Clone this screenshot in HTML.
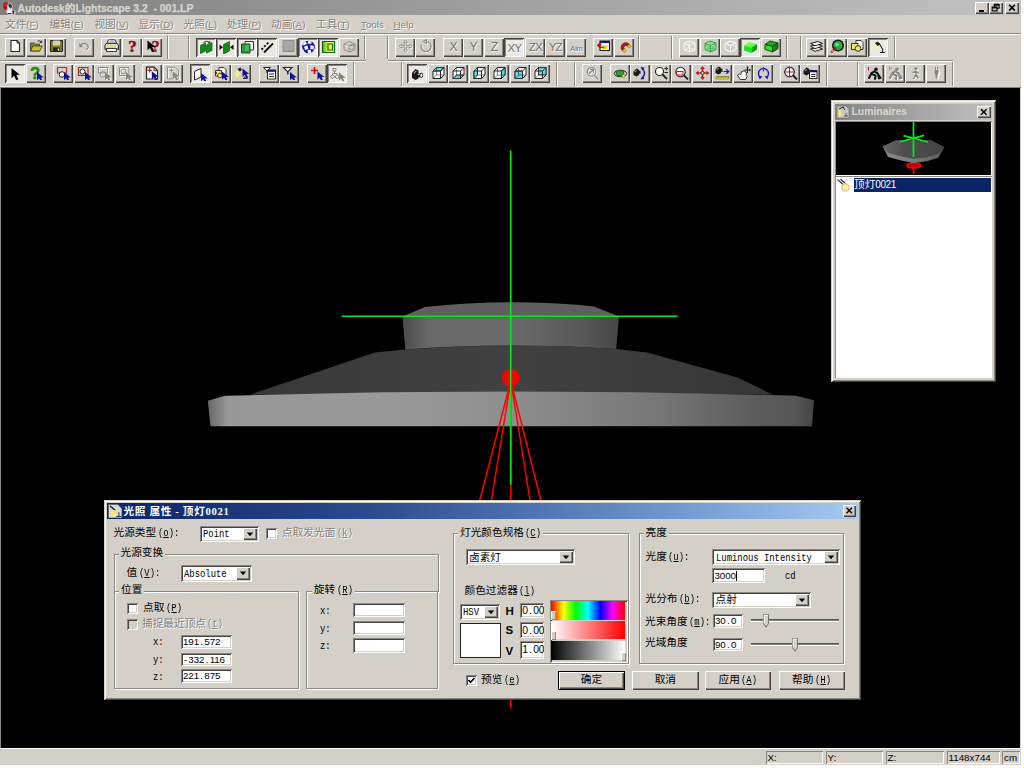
<!DOCTYPE html><html><head><meta charset="utf-8"><title>Lightscape</title><style>
html,body{margin:0;padding:0;background:#fff;}
body{width:1024px;height:768px;position:relative;overflow:hidden;font-family:"Liberation Sans","Noto Sans CJK SC",sans-serif;font-size:10.67px;color:#000;}
div,span,svg,u,b,i{position:absolute;box-sizing:border-box;}
u,b.t,span.t{position:static;}
#app{left:0;top:0;width:1021px;height:765px;background:#d4d0c8;overflow:hidden;}
.b{background:#d4d0c8;box-shadow:inset 1px 1px 0 #fff,inset -1px -1px 0 #45433f,inset -2px -2px 0 #8a8782;}
.p{background:#ebe9e5;box-shadow:inset 1px 1px 0 #45433f,inset -1px -1px 0 #fff,inset 2px 2px 0 #8a8782;}
.vs{width:2px;border-left:1px solid #8a8782;border-right:1px solid #fff;}
.hs{height:2px;border-top:1px solid #8a8782;border-bottom:1px solid #fff;}
.m{top:17px;height:15px;line-height:15px;white-space:nowrap;color:#85827d;text-shadow:1px 1px 0 #fff;font-size:10.67px;}
.m span.t{font-size:9.8px;}
.cj{font-family:"Liberation Mono","Noto Sans CJK SC",monospace;font-size:10.67px;white-space:nowrap;line-height:13px;height:13px;}
.mo{font-family:"Liberation Mono",monospace;font-size:10.67px;white-space:nowrap;line-height:13px;height:13px;transform:translateY(.8px) scaleX(.8333);transform-origin:0 50%;}
.cj span.t{display:inline-block;font-family:"Liberation Mono",monospace;font-size:10.67px;transform:scaleX(.8333);transform-origin:0 50%;white-space:pre;}
.nu{font-family:"Liberation Sans",sans-serif;font-size:9.8px;letter-spacing:-.12px;white-space:nowrap;line-height:13px;height:13px;}
.nu i{position:static;display:inline-block;width:5.33px;text-align:center;font-style:normal;letter-spacing:0;}
.gr{color:#85827d;text-shadow:1px 1px 0 #fff;}
.grp{border:1px solid #8a8782;box-shadow:1px 1px 0 #fff,inset 1px 1px 0 #fff;}
.gl{background:#d4d0c8;padding:0 2px;}
.sk{background:#fff;box-shadow:inset 1px 1px 0 #8a8782,inset -1px -1px 0 #fff,inset 2px 2px 0 #45433f,inset -2px -2px 0 #d4d0c8;}
.cb{width:11px;height:11px;}
.dd{background:#d4d0c8;box-shadow:inset 1px 1px 0 #fff,inset -1px -1px 0 #45433f,inset -2px -2px 0 #8a8782;}
.pb{background:#d4d0c8;box-shadow:inset 1px 1px 0 #fff,inset -1px -1px 0 #45433f,inset -2px -2px 0 #8a8782;text-align:center;}
</style></head><body><div id="app">
<div style="left:0;top:0;width:1021px;height:15.4px;background:linear-gradient(90deg,#808080 0%,#c2c2c2 100%);"></div>
<svg style="left:2px;top:1px" width="15" height="14" viewBox="0 0 15 14"><ellipse cx="3.800" cy="4.800" rx="2.700" ry="3.700" fill="#a81414"/><ellipse cx="3.300" cy="4" rx="1.300" ry="2" fill="#d02828"/><path d="M6 1.500l3 .5 2 3.500-1 2 3.500 2.500v3.500l-3 .5-5-.5-1.500-3 1.500-1.500-.5-3z" fill="#dcdcdc"/><path d="M6.500 2l2.500 1 1.500 3-2 1.500-2-2z" fill="#38404c"/><path d="M5 9.500l2.500-1 1.500 2-1 2.500-2.500-.5z" fill="#f8f8f8"/><path d="M10.500 8.500l2 1.500-.5 3-1.500.5z" fill="#2c3a34"/><path d="M5.500 12.500h4" stroke="#3c4844" stroke-width="1"/></svg>
<div id="ttl" style="left:17.5px;top:1px;height:14px;line-height:14px;font-weight:bold;font-size:10.4px;color:#d8d5ce;-webkit-text-stroke:.25px #d8d5ce;white-space:nowrap;">Autodesk<span class="t" style="font-size:10.67px">的</span>Lightscape 3.2&nbsp; - 001.LP</div>
<div class="b" style="left:975px;top:2px;width:13.5px;height:11.5px"></div><div style="left:978.5px;top:9.5px;width:5px;height:2px;background:#000"></div>
<div class="b" style="left:989px;top:2px;width:13.5px;height:11.5px"></div><svg style="left:989px;top:2px" width="13.5" height="11.5" viewBox="0 0 14 12"><path d="M5.5 2.5h5v4h-5z M5.5 3.3h5" fill="none" stroke="#000" stroke-width="1.2"/><path d="M3.3 5.3h5v4h-5z" fill="#d4d0c8" stroke="#000" stroke-width="1.2"/><path d="M3.3 6h5" stroke="#000" stroke-width="1.4"/></svg>
<div class="b" style="left:1005px;top:2px;width:14px;height:11.5px"></div><svg style="left:1005px;top:2px" width="14" height="11.5" viewBox="0 0 14 12"><path d="M4 3l6 6M10 3l-6 6" stroke="#000" stroke-width="1.5"/></svg>
<div class="m" style="left:5px">文件<span class="t">(<u>F</u>)</span></div>
<div class="m" style="left:49.4px">编辑<span class="t">(<u>E</u>)</span></div>
<div class="m" style="left:94.4px">视图<span class="t">(<u>V</u>)</span></div>
<div class="m" style="left:138.6px">显示<span class="t">(<u>D</u>)</span></div>
<div class="m" style="left:183.6px">光照<span class="t">(<u>L</u>)</span></div>
<div class="m" style="left:226.8px">处理<span class="t">(<u>P</u>)</span></div>
<div class="m" style="left:271px">动画<span class="t">(<u>A</u>)</span></div>
<div class="m" style="left:316px">工具<span class="t">(<u>T</u>)</span></div>
<div class="m" style="left:361px"><span class="t"><u>T</u>ools</span></div>
<div class="m" style="left:393.5px"><span class="t"><u>H</u>elp</span></div>
<div class="hs" style="left:0;top:33px;width:1021px"></div>
<div class="hs" style="left:0;top:59.5px;width:365.5px"></div>
<div class="hs" style="left:387.5px;top:59.5px;width:565px"></div>
<div style="left:0px;top:86px;width:353.5px;height:1px;background:#e6e3dd"></div>
<div style="left:401px;top:86px;width:155.5px;height:1px;background:#e6e3dd"></div>
<div style="left:574.5px;top:86px;width:252.5px;height:1px;background:#e6e3dd"></div>
<div style="left:857.5px;top:86px;width:95px;height:1px;background:#e6e3dd"></div>
<div class="vs" style="left:167px;top:36px;height:23px"></div>
<div class="vs" style="left:188px;top:36px;height:23px"></div>
<div class="vs" style="left:364px;top:36px;height:23px"></div>
<div class="vs" style="left:387px;top:36px;height:23px"></div>
<div class="vs" style="left:637.5px;top:36px;height:23px"></div>
<div class="vs" style="left:670.5px;top:36px;height:23px"></div>
<div class="vs" style="left:785.5px;top:36px;height:23px"></div>
<div class="vs" style="left:799.5px;top:36px;height:23px"></div>
<div class="vs" style="left:893.5px;top:36px;height:23px"></div>
<div class="vs" style="left:352.5px;top:62px;height:24px"></div>
<div class="vs" style="left:400.5px;top:62px;height:24px"></div>
<div class="vs" style="left:555.5px;top:62px;height:24px"></div>
<div class="vs" style="left:574px;top:62px;height:24px"></div>
<div class="vs" style="left:826px;top:62px;height:24px"></div>
<div class="vs" style="left:857px;top:62px;height:24px"></div>
<div class="vs" style="left:951.5px;top:62px;height:24px"></div>
<div class="b" style="left:5px;top:38px;width:20px;height:19px">
<svg style="left:2.5px;top:1.3px" width="15" height="14" viewBox="0 0 15 14"><path d="M3 1.500h6l2.500 2.500v8.500H3z" fill="#fff" stroke="#222" stroke-width="1.100"/><path d="M9 1.500v2.500h2.500" fill="none" stroke="#222" stroke-width=".9"/></svg>
</div>
<div class="b" style="left:26px;top:38px;width:20px;height:19px">
<svg style="left:2.5px;top:1.3px" width="15" height="14" viewBox="0 0 15 14"><path d="M1.500 4h4l1 1.200h4V12h-9z" fill="#8a8a10" stroke="#333" stroke-width=".8"/><path d="M1.500 12l2.300-5h9.700l-3 5z" fill="#c4c42c" stroke="#333" stroke-width=".8"/><path d="M8.500 2.200q2.500-1.500 4 1M12.700 1.500v2h-2" fill="none" stroke="#222" stroke-width=".9"/></svg>
</div>
<div class="b" style="left:46px;top:38px;width:20px;height:19px">
<svg style="left:2.5px;top:1.3px" width="15" height="14" viewBox="0 0 15 14"><path d="M1.500 1.500h12v11h-12z" fill="#80800c" stroke="#222" stroke-width="1"/><path d="M4 1.500h7v5H4z" fill="#d4d0c8"/><path d="M4 8.500h7v4H4z" fill="#222"/><path d="M8.800 9.500h1.400v2.200H8.800z" fill="#eee"/></svg>
</div>
<div class="b" style="left:74px;top:38px;width:20px;height:19px">
<svg style="left:2.5px;top:1.3px" width="15" height="14" viewBox="0 0 15 14"><path d="M3.500 6.500q3.500-3.500 6.500-1t-1 5.500" fill="none" stroke="#fff" stroke-width="1.300" transform="translate(.8 .8)"/><path d="M3.500 6.500q3.500-3.500 6.500-1t-1 5.500" fill="none" stroke="#8a8782" stroke-width="1.300"/><path d="M2 4l.5 4.500 4-1z" fill="#8a8782"/></svg>
</div>
<div class="b" style="left:101px;top:38px;width:20px;height:19px">
<svg style="left:2.5px;top:1.3px" width="15" height="14" viewBox="0 0 15 14"><path d="M4.500 .800h6.500l1.500 3.500h-9.500z" fill="#fff" stroke="#222" stroke-width=".9"/><path d="M2.500 4.300h10.500l1.500 2v4h-13.500v-4z" fill="#d8d8d8" stroke="#222" stroke-width="1"/><path d="M2.500 9.500h10v3h-10z" fill="#fff" stroke="#222" stroke-width=".9"/><path d="M3.500 8h8" stroke="#e0d820" stroke-width="1.300"/><path d="M5.500 2.300h4.500" stroke="#888" stroke-width=".7"/></svg>
</div>
<div class="b" style="left:122px;top:38px;width:20px;height:19px">
<svg style="left:2.5px;top:1.3px" width="15" height="14" viewBox="0 0 15 14"><text x="7.500" y="13" text-anchor="middle" font-family="Liberation Serif,serif" font-weight="bold" font-size="17" fill="#8c0c14" stroke="#8c0c14" stroke-width=".5">?</text></svg>
</div>
<div class="b" style="left:142px;top:38px;width:20px;height:19px">
<svg style="left:2.5px;top:1.3px" width="15" height="14" viewBox="0 0 15 14"><text x="10.500" y="13" text-anchor="middle" font-family="Liberation Serif,serif" font-weight="bold" font-size="16.500" fill="#9c1018" stroke="#9c1018" stroke-width=".4">?</text><path d="M2.5 1.5l0 9.8l2.52 -2.24l2.1 4.2l2.1 -0.98l-1.96 -4.2l3.36 0z" fill="#000"/></svg>
</div>
<div class="p" style="left:196px;top:38px;width:20px;height:19px">
<svg style="left:3.2px;top:2px" width="15" height="14" viewBox="0 0 15 14"><path d="M1.500 5.500l5-2.500v8l-5 2.500z" fill="#148a14" stroke="#0a5a0a" stroke-width=".7"/><path d="M7.500 5l5.500-2.500v8L7.500 13z" fill="#148a14" stroke="#0a5a0a" stroke-width=".7"/><path d="M4.500 2.500q3-2.500 6 0M10.800 1v1.800H9" fill="none" stroke="#222" stroke-width=".9"/></svg>
</div>
<div class="p" style="left:216px;top:38px;width:20px;height:19px">
<svg style="left:3.2px;top:2px" width="15" height="14" viewBox="0 0 15 14"><path d="M4.500 4.500l6-3v9.500l-6 3z" fill="#148a14" stroke="#0a5a0a" stroke-width=".7"/><path d="M.500 4.500l3.500 2.800-3.500 2.800zM14.500 4.500l-3.500 2.800 3.500 2.800z" fill="#111"/></svg>
</div>
<div class="p" style="left:237px;top:38px;width:20px;height:19px">
<svg style="left:3.2px;top:2px" width="15" height="14" viewBox="0 0 15 14"><path d="M5 1.500h8.500V10H5z" fill="#fff" stroke="#333" stroke-width="1"/><path d="M1.500 4h8.500v9H1.500z" fill="#2c9a3c" stroke="#0a5a0a" stroke-width="1"/><path d="M5 5h4v6H5z" fill="#58b868" opacity=".8"/></svg>
</div>
<div class="p" style="left:257px;top:38px;width:20px;height:19px">
<svg style="left:3.2px;top:2px" width="15" height="14" viewBox="0 0 15 14"><path d="M4 12.500L13 3.500" stroke="#111" stroke-width="1.800"/><path d="M1.500 9.500l7.500-7.500" stroke="#111" stroke-width="2" stroke-dasharray="2 1.800"/></svg>
</div>
<div class="b" style="left:278px;top:38px;width:20px;height:19px">
<svg style="left:2.5px;top:1.3px" width="15" height="14" viewBox="0 0 15 14"><path d="M2 1.500h11v11H2z" fill="#a8a6a2" stroke="#8e8c88" stroke-width="1"/></svg>
</div>
<div class="p" style="left:298px;top:38px;width:20px;height:19px">
<svg style="left:3.2px;top:2px" width="15" height="14" viewBox="0 0 15 14"><defs><clipPath id="sph"><circle cx="7.500" cy="7" r="6.300"/></clipPath></defs><circle cx="7.500" cy="7" r="6.300" fill="#1414b4"/><g clip-path="url(#sph)" fill="#f4f4ff"><path d="M1 2.500l3.500-1.500 1.500 3-3.500 1.500zM7.500 0l3.500 1-1 3-3.500-.5zM3 6.500l3.500-1 .8 3.500-3.300 1zM9.500 5l3.500 1-.5 3.500-3.200-.5zM0 10l2.500-.5 1.500 3.500-3 1zM6.500 10l3-0.500 1 3.500-3.500.5zM12.500 10.500l2.500.5v3h-2z"/></g></svg>
</div>
<div class="p" style="left:318px;top:38px;width:20px;height:19px">
<svg style="left:3.2px;top:2px" width="15" height="14" viewBox="0 0 15 14"><defs><linearGradient id="yg" x1="0" x2="1"><stop offset="0" stop-color="#4cb020"/><stop offset=".5" stop-color="#e8f040"/><stop offset="1" stop-color="#f4f470"/></linearGradient></defs><path d="M1.500 1.500h12v11h-12z" fill="url(#yg)" stroke="#0c6a0c" stroke-width="1.200"/><path d="M7 4h4.500v6H7z" fill="none" stroke="#0c6a0c" stroke-width="1.100"/></svg>
</div>
<div class="b" style="left:339px;top:38px;width:20px;height:19px">
<svg style="left:2.5px;top:1.3px" width="15" height="14" viewBox="0 0 15 14"><g fill="none" stroke="#8a8782" stroke-width=".9"><path d="M2 5l5-2.500 6 2.500v6l-6 2-5-2.500z"/><path d="M2 5l5 2.500 6-2.500M7 7.500v5.500"/><circle cx="9.500" cy="8" r="2.500"/></g><path d="M3 6l5 2.500" stroke="#fff" stroke-width=".7"/></svg>
</div>
<div class="b" style="left:395px;top:38px;width:20px;height:19px">
<svg style="left:2.5px;top:1.3px" width="15" height="14" viewBox="0 0 15 14"><g fill="none" stroke-width="0.9"><g stroke="#fff" transform="translate(.8 .8)"><path d="M7.500 1l-2 2.500h1.300v3H3.500V5.200L1 7.300l2.500 2V8h3.300v3H5.500l2 2.500 2-2.500H8.200V8h3.300v1.300l2.500-2-2.500-2.100v1.300H8.200v-3h1.300z"/></g><g stroke="#8a8782"><path d="M7.500 1l-2 2.500h1.300v3H3.500V5.200L1 7.300l2.500 2V8h3.300v3H5.500l2 2.500 2-2.500H8.200V8h3.300v1.300l2.500-2-2.500-2.100v1.300H8.200v-3h1.300z"/></g></g></svg>
</div>
<div class="b" style="left:415px;top:38px;width:20px;height:19px">
<svg style="left:2.5px;top:1.3px" width="15" height="14" viewBox="0 0 15 14"><g fill="none" stroke-width="1.2"><g stroke="#fff" transform="translate(.8 .8)"><path d="M8 2.500a5 5 0 1 1-4.500 3"/><path d="M8.500.500v4l-3-2z"/></g><g stroke="#8a8782"><path d="M8 2.500a5 5 0 1 1-4.500 3"/><path d="M8.500.500v4l-3-2z"/></g></g></svg>
</div>
<div class="b" style="left:443px;top:38px;width:20px;height:19px">
<svg style="left:2.5px;top:1.3px" width="15" height="14" viewBox="0 0 15 14"><text x="8.300" y="12.900" text-anchor="middle" font-family="Liberation Sans,sans-serif" font-size="12.3" letter-spacing="0" fill="#fff">X</text><text x="7.500" y="12.100" text-anchor="middle" font-family="Liberation Sans,sans-serif" font-size="12.3" letter-spacing="0" fill="#716e6a">X</text></svg>
</div>
<div class="b" style="left:463px;top:38px;width:20px;height:19px">
<svg style="left:2.5px;top:1.3px" width="15" height="14" viewBox="0 0 15 14"><text x="8.300" y="12.900" text-anchor="middle" font-family="Liberation Sans,sans-serif" font-size="12.3" letter-spacing="0" fill="#fff">Y</text><text x="7.500" y="12.100" text-anchor="middle" font-family="Liberation Sans,sans-serif" font-size="12.3" letter-spacing="0" fill="#716e6a">Y</text></svg>
</div>
<div class="b" style="left:484px;top:38px;width:20px;height:19px">
<svg style="left:2.5px;top:1.3px" width="15" height="14" viewBox="0 0 15 14"><text x="8.300" y="12.900" text-anchor="middle" font-family="Liberation Sans,sans-serif" font-size="12.3" letter-spacing="0" fill="#fff">Z</text><text x="7.500" y="12.100" text-anchor="middle" font-family="Liberation Sans,sans-serif" font-size="12.3" letter-spacing="0" fill="#716e6a">Z</text></svg>
</div>
<div class="p" style="left:504px;top:38px;width:20px;height:19px">
<svg style="left:3.2px;top:2px" width="15" height="14" viewBox="0 0 15 14"><text x="8.300" y="12.900" text-anchor="middle" font-family="Liberation Sans,sans-serif" font-size="11.3" letter-spacing="-0.6" fill="#fff">XY</text><text x="7.500" y="12.100" text-anchor="middle" font-family="Liberation Sans,sans-serif" font-size="11.3" letter-spacing="-0.6" fill="#716e6a">XY</text></svg>
</div>
<div class="b" style="left:525px;top:38px;width:20px;height:19px">
<svg style="left:2.5px;top:1.3px" width="15" height="14" viewBox="0 0 15 14"><text x="8.300" y="12.900" text-anchor="middle" font-family="Liberation Sans,sans-serif" font-size="11.3" letter-spacing="-0.6" fill="#fff">ZX</text><text x="7.500" y="12.100" text-anchor="middle" font-family="Liberation Sans,sans-serif" font-size="11.3" letter-spacing="-0.6" fill="#716e6a">ZX</text></svg>
</div>
<div class="b" style="left:545px;top:38px;width:20px;height:19px">
<svg style="left:2.5px;top:1.3px" width="15" height="14" viewBox="0 0 15 14"><text x="8.300" y="12.900" text-anchor="middle" font-family="Liberation Sans,sans-serif" font-size="11.3" letter-spacing="-0.6" fill="#fff">YZ</text><text x="7.500" y="12.100" text-anchor="middle" font-family="Liberation Sans,sans-serif" font-size="11.3" letter-spacing="-0.6" fill="#716e6a">YZ</text></svg>
</div>
<div class="b" style="left:566px;top:38px;width:20px;height:19px">
<svg style="left:2.5px;top:1.3px" width="15" height="14" viewBox="0 0 15 14"><text x="8.300" y="12.900" text-anchor="middle" font-family="Liberation Sans,sans-serif" font-size="7.5" letter-spacing="-0.2" fill="#fff">Aim</text><text x="7.500" y="12.100" text-anchor="middle" font-family="Liberation Sans,sans-serif" font-size="7.5" letter-spacing="-0.2" fill="#716e6a">Aim</text></svg>
</div>
<div class="b" style="left:593px;top:38px;width:20px;height:19px">
<svg style="left:2.5px;top:1.3px" width="15" height="14" viewBox="0 0 15 14"><path d="M4 2h9.500v9.500H4z" fill="#f4f4f4" stroke="#222" stroke-width="1.100"/><path d="M4 2h9.500v2H4z" fill="#10108a"/><path d="M6 6.500h5.500v3.500H6z" fill="#e8d820"/><path d="M1 6l3.500-3 1 2.500-1.500 3.500z" fill="#c01818"/><path d="M1 6l3 2.500 4.500-.5" stroke="#801010" stroke-width="1" fill="none"/></svg>
</div>
<div class="b" style="left:614px;top:38px;width:20px;height:19px">
<svg style="left:2.5px;top:1.3px" width="15" height="14" viewBox="0 0 15 14"><g transform="rotate(-42 7.500 7)"><path d="M2.800 9a4.700 4.700 0 0 1 9.400 0h-2.700a2 2 0 0 0-4 0z" fill="#c01414" stroke="#601010" stroke-width=".7"/><path d="M2.800 9h2.700v2.800H2.800zM9.500 9h2.700v2.800H9.500z" fill="#e8d020" stroke="#806c10" stroke-width=".6"/></g></svg>
</div>
<div class="b" style="left:679px;top:38px;width:20px;height:19px">
<svg style="left:2.5px;top:1.3px" width="15" height="14" viewBox="0 0 15 14"><path d="M2 4.500l5-2.500 6 2v6.500l-5.500 2.500-5.500-2.500z" fill="none" stroke="#fff" stroke-width="0.9"/><path d="M2 4.500l5.500 2 5.500-2.500M7.500 6.500v6.500" fill="none" stroke="#fff" stroke-width="0.9"/><path d="M2 11l5-2 6 1.500M7 2v7" fill="none" stroke="#fff" stroke-width=".7"/></svg>
</div>
<div class="b" style="left:700px;top:38px;width:20px;height:19px">
<svg style="left:2.5px;top:1.3px" width="15" height="14" viewBox="0 0 15 14"><path d="M2 4.500l5-2.500 6 2v6.500l-5.500 2.500-5.500-2.500z" fill="#a8e8b0" opacity=".7"/><path d="M2 4.500l5-2.500 6 2v6.500l-5.500 2.500-5.500-2.500z" fill="none" stroke="#28a038" stroke-width="1"/><path d="M2 4.500l5.500 2 5.500-2.500M7.500 6.500v6.500" fill="none" stroke="#28a038" stroke-width="1"/><path d="M2 11l5-2 6 1.500M7 2v7M2 4.500l5.500 8.500M13 4l-5.500 9M2 11l5.500-4.500L13 10.500" fill="none" stroke="#48b858" stroke-width=".8"/></svg>
</div>
<div class="b" style="left:720px;top:38px;width:20px;height:19px">
<svg style="left:2.5px;top:1.3px" width="15" height="14" viewBox="0 0 15 14"><path d="M2 4.500l5-2.500 6 2v6.500l-5.500 2.500-5.500-2.500z" fill="none" stroke="#fff" stroke-width="1"/><path d="M2 4.500l5.500 2 5.500-2.500M7.500 6.500v6.500" fill="none" stroke="#fff" stroke-width="1"/></svg>
</div>
<div class="p" style="left:740px;top:38px;width:20px;height:19px">
<svg style="left:3.2px;top:2px" width="15" height="14" viewBox="0 0 15 14"><path d="M1 5.500l5-3.500 8 2-5.500 3.500z" fill="#6cff48"/><path d="M1 5.500l7.500 2v5.500l-7.500-2.500z" fill="#20e420"/><path d="M8.500 7.500l5.500-3.500v5.500l-5.500 3.500z" fill="#0ca00c"/></svg>
</div>
<div class="b" style="left:761px;top:38px;width:20px;height:19px">
<svg style="left:2.5px;top:1.3px" width="15" height="14" viewBox="0 0 15 14"><path d="M1 5.500l5-3.500 8 2-5.500 3.500z" fill="#18a818" stroke="#063c06" stroke-width=".9"/><path d="M1 5.500l7.500 2v5.500l-7.500-2.500z" fill="#28e428" stroke="#063c06" stroke-width=".9"/><path d="M8.500 7.500l5.500-3.500v5.500l-5.500 3.500z" fill="#0c8a0c" stroke="#063c06" stroke-width=".9"/></svg>
</div>
<div class="b" style="left:806px;top:38px;width:20px;height:19px">
<svg style="left:2.5px;top:1.3px" width="15" height="14" viewBox="0 0 15 14"><g fill="#fff" stroke="#1a1a1a" stroke-width="1"><path d="M1.500 10l7.500-2 4.500 2-7.500 2.300z"/><path d="M1.500 7.300l7.500-2 4.500 2-7.500 2.300z"/><path d="M1.500 4.500l7.500-2 4.500 2-7.500 2.300z"/></g></svg>
</div>
<div class="b" style="left:827px;top:38px;width:20px;height:19px">
<svg style="left:2.5px;top:1.3px" width="15" height="14" viewBox="0 0 15 14"><circle cx="8" cy="6.500" r="6" fill="#111"/><circle cx="8" cy="6.500" r="4.500" fill="#28b038"/><circle cx="7" cy="5.500" r="1.800" fill="#7cdc84"/><path d="M1 13.500l5-5" stroke="#b01414" stroke-width="2.200"/><path d="M1.500 13l2-2" stroke="#fff" stroke-width="1"/></svg>
</div>
<div class="b" style="left:847px;top:38px;width:20px;height:19px">
<svg style="left:2.5px;top:1.3px" width="15" height="14" viewBox="0 0 15 14"><path d="M6 1.500h5l2 2v7H6z" fill="#fff" stroke="#222" stroke-width=".9"/><path d="M1.500 4.500h6.500v6h-6.500z" fill="#f0e868" stroke="#222" stroke-width=".9"/><circle cx="8" cy="9.500" r="2.800" fill="#f0e868" stroke="#222" stroke-width=".9"/></svg>
</div>
<div class="p" style="left:868px;top:38px;width:20px;height:19px">
<svg style="left:3.2px;top:2px" width="15" height="14" viewBox="0 0 15 14"><path d="M1 7.500l3.500-4 2.500 2-2 5z" fill="#f8f490"/><path d="M4 3l3-1.500 2 3-2.500 1.500z" fill="#222"/><path d="M8 3l4 7M9 12.500h5M11.500 10v2.500" stroke="#222" stroke-width="1.100" fill="none"/></svg>
</div>
<div class="p" style="left:5px;top:64px;width:20px;height:19px">
<svg style="left:3.2px;top:3px" width="15" height="14" viewBox="0 0 15 14"><path d="M3.5 1l0 10.15l2.61 -2.32l2.175 4.35l2.175 -1.015l-2.03 -4.35l3.48 0z" fill="#000"/></svg>
</div>
<div class="b" style="left:26px;top:64px;width:20px;height:19px">
<svg style="left:2.5px;top:2.3px" width="15" height="14" viewBox="0 0 15 14"><text x="6" y="13" text-anchor="middle" font-family="Liberation Sans,sans-serif" font-weight="bold" font-size="16.500" fill="#148a14" stroke="#148a14" stroke-width=".5">?</text><path d="M8 6l0 8.26l2.124 -1.888l1.77 3.54l1.77 -0.826l-1.652 -3.54l2.832 0z" fill="#10109a"/></svg>
</div>
<div class="b" style="left:53px;top:64px;width:20px;height:19px">
<svg style="left:2.5px;top:2.3px" width="15" height="14" viewBox="0 0 15 14"><path d="M1.500 1.500h9v5.500h-9z" fill="none" stroke="#b82020" stroke-width="1.100"/><circle cx="6" cy="8.500" r="2.800" fill="#fff" stroke="#222" stroke-width="1"/><path d="M8 6l0 8.26l2.124 -1.888l1.77 3.54l1.77 -0.826l-1.652 -3.54l2.832 0z" fill="#10109a"/></svg>
</div>
<div class="b" style="left:74px;top:64px;width:20px;height:19px">
<svg style="left:2.5px;top:2.3px" width="15" height="14" viewBox="0 0 15 14"><path d="M1.500 1.500h9.500v8h-9.500z" fill="none" stroke="#b82020" stroke-width="1.100"/><circle cx="5.500" cy="5.500" r="2.500" fill="#fff" stroke="#222" stroke-width="1"/><path d="M8 6l0 8.26l2.124 -1.888l1.77 3.54l1.77 -0.826l-1.652 -3.54l2.832 0z" fill="#10109a"/></svg>
</div>
<div class="b" style="left:94px;top:64px;width:20px;height:19px">
<svg style="left:2.5px;top:2.3px" width="15" height="14" viewBox="0 0 15 14"><g fill="none" stroke-width="1"><g stroke="#fff" transform="translate(.8 .8)"><path d="M1.500 1.500h9v5.500h-9z"/><circle cx="6" cy="8.500" r="2.800"/></g><g stroke="#8a8782"><path d="M1.500 1.500h9v5.500h-9z"/><circle cx="6" cy="8.500" r="2.800"/></g></g><g transform="translate(.8 .8)"><path d="M8 6l0 8.26l2.124 -1.888l1.77 3.54l1.77 -0.826l-1.652 -3.54l2.832 0z" fill="#fff"/></g><path d="M8 6l0 8.26l2.124 -1.888l1.77 3.54l1.77 -0.826l-1.652 -3.54l2.832 0z" fill="#8a8782"/></svg>
</div>
<div class="b" style="left:115px;top:64px;width:20px;height:19px">
<svg style="left:2.5px;top:2.3px" width="15" height="14" viewBox="0 0 15 14"><g fill="none" stroke-width="1"><g stroke="#fff" transform="translate(.8 .8)"><path d="M1.500 1.500h9.500v8h-9.500z"/><circle cx="5.500" cy="5.500" r="2.500"/></g><g stroke="#8a8782"><path d="M1.500 1.500h9.500v8h-9.500z"/><circle cx="5.500" cy="5.500" r="2.500"/></g></g><g transform="translate(.8 .8)"><path d="M8 6l0 8.26l2.124 -1.888l1.77 3.54l1.77 -0.826l-1.652 -3.54l2.832 0z" fill="#fff"/></g><path d="M8 6l0 8.26l2.124 -1.888l1.77 3.54l1.77 -0.826l-1.652 -3.54l2.832 0z" fill="#8a8782"/></svg>
</div>
<div class="b" style="left:142px;top:64px;width:20px;height:19px">
<svg style="left:2.5px;top:2.3px" width="15" height="14" viewBox="0 0 15 14"><path d="M1.500 1.200h7.500l3.500 3.500v8.300H1.500z" fill="#fff" stroke="#222" stroke-width="1.200"/><path d="M9 1.200v3.500h3.500" fill="none" stroke="#222" stroke-width=".9"/><path d="M2.500 4.300h4.500M4.700 2v4.600" stroke="#c01818" stroke-width="1.200"/><path d="M6.8 5.2l0 8.26l2.124 -1.888l1.77 3.54l1.77 -0.826l-1.652 -3.54l2.832 0z" fill="#10109a"/></svg>
</div>
<div class="b" style="left:163px;top:64px;width:20px;height:19px">
<svg style="left:2.5px;top:2.3px" width="15" height="14" viewBox="0 0 15 14"><g fill="none" stroke-width="1"><g stroke="#fff" transform="translate(.8 .8)"><path d="M1.500 1.200h7.500l3.500 3.500v8.300H1.500z"/><path d="M3.500 4.500h4M5.500 2.500v4"/></g><g stroke="#8a8782"><path d="M1.500 1.200h7.500l3.500 3.500v8.300H1.500z"/><path d="M3.500 4.500h4M5.500 2.500v4"/></g></g><g transform="translate(.8 .8)"><path d="M6.8 5.2l0 8.26l2.124 -1.888l1.77 3.54l1.77 -0.826l-1.652 -3.54l2.832 0z" fill="#fff"/></g><path d="M6.8 5.2l0 8.26l2.124 -1.888l1.77 3.54l1.77 -0.826l-1.652 -3.54l2.832 0z" fill="#8a8782"/></svg>
</div>
<div class="p" style="left:190px;top:64px;width:20px;height:19px">
<svg style="left:3.2px;top:3px" width="15" height="14" viewBox="0 0 15 14"><path d="M1.500 4.500l6.500-3v8.500l-6.500 3z" fill="#fff" stroke="#222" stroke-width="1"/><path d="M8 6l0 8.26l2.124 -1.888l1.77 3.54l1.77 -0.826l-1.652 -3.54l2.832 0z" fill="#10109a"/></svg>
</div>
<div class="b" style="left:211px;top:64px;width:20px;height:19px">
<svg style="left:2.5px;top:2.3px" width="15" height="14" viewBox="0 0 15 14"><path d="M5 1.500h5l2 2v6.500H5z" fill="#fff" stroke="#222" stroke-width=".9"/><path d="M1.500 4.500h6v5.500h-6z" fill="#f0e868" stroke="#222" stroke-width=".9"/><circle cx="6" cy="9.500" r="2.300" fill="#f0e868" stroke="#222" stroke-width=".8"/><path d="M1 7h2" stroke="#222" stroke-width="1.500"/><path d="M8 5.5l0 8.26l2.124 -1.888l1.77 3.54l1.77 -0.826l-1.652 -3.54l2.832 0z" fill="#10109a"/></svg>
</div>
<div class="b" style="left:231px;top:64px;width:20px;height:19px">
<svg style="left:2.5px;top:2.3px" width="15" height="14" viewBox="0 0 15 14"><path d="M1 7l2.500-3 2.500 2-1.500 5-2.500 0z" fill="#f4f090"/><path d="M3.500 3l3-1.500 1.500 2.500-2.500 1.500z" fill="#222"/><path d="M9 12.500h4.500M9.500 10.500l3 2" stroke="#222" stroke-width="1"/><path d="M8.5 2.5l0 8.26l2.124 -1.888l1.77 3.54l1.77 -0.826l-1.652 -3.54l2.832 0z" fill="#10109a"/></svg>
</div>
<div class="b" style="left:259px;top:64px;width:20px;height:19px">
<svg style="left:2.5px;top:2.3px" width="15" height="14" viewBox="0 0 15 14"><path d="M1.500 1.500h7l-3.500 3.500z" fill="#fff" stroke="#222" stroke-width="1"/><path d="M5 5v2" stroke="#222" stroke-width="1.200"/><path d="M5.500 4h8v9h-8z" fill="#fff" stroke="#222" stroke-width="1"/><path d="M5.500 4h8v1.800h-8z" fill="#10108a"/><path d="M7 8h5M7 10.500h5" stroke="#222" stroke-width="1"/></svg>
</div>
<div class="b" style="left:279px;top:64px;width:20px;height:19px">
<svg style="left:2.5px;top:2.3px" width="15" height="14" viewBox="0 0 15 14"><path d="M1.500 1.500h8.500l-4.200 4.500z" fill="#fff" stroke="#222" stroke-width="1.100"/><path d="M5.800 6v2.500" stroke="#222" stroke-width="1.400"/><path d="M8 6l0 8.26l2.124 -1.888l1.77 3.54l1.77 -0.826l-1.652 -3.54l2.832 0z" fill="#10109a"/></svg>
</div>
<div class="b" style="left:307px;top:64px;width:20px;height:19px">
<svg style="left:2.5px;top:2.3px" width="15" height="14" viewBox="0 0 15 14"><path d="M1 4.500h7M4.500 1v7" stroke="#c01818" stroke-width="1.700"/><path d="M7.5 5.5l0 8.26l2.124 -1.888l1.77 3.54l1.77 -0.826l-1.652 -3.54l2.832 0z" fill="#10109a"/></svg>
</div>
<div class="p" style="left:327px;top:64px;width:20px;height:19px">
<svg style="left:3.2px;top:3px" width="15" height="14" viewBox="0 0 15 14"><g fill="none" stroke-width="1"><g stroke="#fff" transform="translate(.8 .8)"><path d="M3 1.500h3v2.500H3zM4.500 4v2.500M2.500 8v-1.500h4.500v1.500"/><circle cx="2.500" cy="9.800" r="1.700"/><circle cx="7" cy="9.800" r="1.700"/></g><g stroke="#8a8782"><path d="M3 1.500h3v2.500H3zM4.500 4v2.500M2.500 8v-1.500h4.500v1.500"/><circle cx="2.500" cy="9.800" r="1.700"/><circle cx="7" cy="9.800" r="1.700"/></g></g><g transform="translate(.8 .8)"><path d="M9 5.5l0 8.26l2.124 -1.888l1.77 3.54l1.77 -0.826l-1.652 -3.54l2.832 0z" fill="#fff"/></g><path d="M9 5.5l0 8.26l2.124 -1.888l1.77 3.54l1.77 -0.826l-1.652 -3.54l2.832 0z" fill="#8a8782"/></svg>
</div>
<div class="p" style="left:407px;top:64px;width:20px;height:19px">
<svg style="left:3.2px;top:3px" width="15" height="14" viewBox="0 0 15 14"><path d="M2 6l3.500-4 3 1.500v3l3-.8 1.500 1v3l-1.500 1-3-.8v1.600l-3 1.500-3.500-2z" fill="#1a1a1a"/><path d="M3.300 6.200l2.500-2.800 1 .5-2.300 2.800z" fill="#999"/><ellipse cx="11.300" cy="8.200" rx="1.100" ry="1.700" fill="#f0f0f0"/><path d="M7.500 7.500l2.500-.6" stroke="#eee" stroke-width=".9"/></svg>
</div>
<div class="b" style="left:428px;top:64px;width:20px;height:19px">
<svg style="left:2.5px;top:2.3px" width="15" height="14" viewBox="0 0 15 14"><path d="M2 5l3.500-3.500h7.500v7.500l-3.500 3.500h-7.500z" fill="#fff" stroke="#222" stroke-width="1"/><path d="M2 5l3.500-3.500h7.500l-3.500 3.500z" fill="#60d8e0" stroke="#222" stroke-width=".8"/><path d="M2 12.500l3.500-3.500M5.500 1.500v7.500h7.500" fill="none" stroke="#222" stroke-width=".55"/><path d="M2 5h7.500v7.500M9.500 5l3.500-3.500" fill="none" stroke="#222" stroke-width="1"/></svg>
</div>
<div class="b" style="left:448px;top:64px;width:20px;height:19px">
<svg style="left:2.5px;top:2.3px" width="15" height="14" viewBox="0 0 15 14"><path d="M2 5l3.500-3.500h7.500v7.500l-3.500 3.500h-7.500z" fill="#fff" stroke="#222" stroke-width="1"/><path d="M2 12.500l3.500-3.500h7.500l-3.500 3.500z" fill="#60d8e0" stroke="#222" stroke-width=".8"/><path d="M2 12.500l3.500-3.500M5.500 1.500v7.500h7.500" fill="none" stroke="#222" stroke-width=".55"/><path d="M2 5h7.500v7.500M9.500 5l3.500-3.500" fill="none" stroke="#222" stroke-width="1"/></svg>
</div>
<div class="b" style="left:469px;top:64px;width:20px;height:19px">
<svg style="left:2.5px;top:2.3px" width="15" height="14" viewBox="0 0 15 14"><path d="M2 5l3.500-3.500h7.500v7.500l-3.500 3.500h-7.500z" fill="#fff" stroke="#222" stroke-width="1"/><path d="M2 5l3.500-3.500v7.500l-3.500 3.500z" fill="#60d8e0" stroke="#222" stroke-width=".8"/><path d="M2 12.500l3.500-3.500M5.500 1.500v7.500h7.500" fill="none" stroke="#222" stroke-width=".55"/><path d="M2 5h7.500v7.500M9.500 5l3.500-3.500" fill="none" stroke="#222" stroke-width="1"/></svg>
</div>
<div class="b" style="left:489px;top:64px;width:20px;height:19px">
<svg style="left:2.5px;top:2.3px" width="15" height="14" viewBox="0 0 15 14"><path d="M2 5l3.500-3.500h7.500v7.500l-3.500 3.500h-7.500z" fill="#fff" stroke="#222" stroke-width="1"/><path d="M9.500 5l3.500-3.500v7.500l-3.500 3.500z" fill="#60d8e0" stroke="#222" stroke-width=".8"/><path d="M2 12.500l3.500-3.500M5.500 1.500v7.500h7.500" fill="none" stroke="#222" stroke-width=".55"/><path d="M2 5h7.500v7.500M9.500 5l3.500-3.500" fill="none" stroke="#222" stroke-width="1"/></svg>
</div>
<div class="b" style="left:510px;top:64px;width:20px;height:19px">
<svg style="left:2.5px;top:2.3px" width="15" height="14" viewBox="0 0 15 14"><path d="M2 5l3.500-3.500h7.500v7.500l-3.500 3.500h-7.500z" fill="#fff" stroke="#222" stroke-width="1"/><path d="M2 5h7.500v7.500h-7.500z" fill="#60d8e0" stroke="#222" stroke-width=".8"/><path d="M2 12.500l3.500-3.500M5.500 1.500v7.500h7.500" fill="none" stroke="#222" stroke-width=".55"/><path d="M2 5h7.500v7.500M9.500 5l3.500-3.500" fill="none" stroke="#222" stroke-width="1"/></svg>
</div>
<div class="b" style="left:530px;top:64px;width:20px;height:19px">
<svg style="left:2.5px;top:2.3px" width="15" height="14" viewBox="0 0 15 14"><path d="M2 5l3.500-3.500h7.500v7.500l-3.500 3.500h-7.500z" fill="#fff" stroke="#222" stroke-width="1"/><path d="M5.500 1.500h7.500v7.500h-7.500z" fill="#60d8e0" stroke="#222" stroke-width=".8"/><path d="M2 12.500l3.500-3.500M5.500 1.500v7.500h7.500" fill="none" stroke="#222" stroke-width=".55"/><path d="M2 5h7.500v7.500M9.500 5l3.500-3.500" fill="none" stroke="#222" stroke-width="1"/></svg>
</div>
<div class="b" style="left:582px;top:64px;width:20px;height:19px">
<svg style="left:2.5px;top:2.3px" width="15" height="14" viewBox="0 0 15 14"><g fill="none" stroke-width="1.1"><g stroke="#fff" transform="translate(.8 .8)"><circle cx="6.500" cy="6" r="4.300"/><path d="M9.500 9.500l4 4M4 8l4-4M5 3.500h3.500v3.500"/></g><g stroke="#8a8782"><circle cx="6.500" cy="6" r="4.300"/><path d="M9.500 9.500l4 4M4 8l4-4M5 3.500h3.500v3.500"/></g></g></svg>
</div>
<div class="b" style="left:610px;top:64px;width:20px;height:19px">
<svg style="left:2.5px;top:2.3px" width="15" height="14" viewBox="0 0 15 14"><ellipse cx="7.500" cy="7.500" rx="6.300" ry="3.200" fill="none" stroke="#222" stroke-width="1"/><ellipse cx="7" cy="7" rx="4" ry="2.800" fill="#2ca03c" stroke="#0a5a0a" stroke-width=".8"/><circle cx="10.500" cy="10" r="1.700" fill="#f0e020" stroke="#555" stroke-width=".5"/></svg>
</div>
<div class="b" style="left:630px;top:64px;width:20px;height:19px">
<svg style="left:2.5px;top:2.3px" width="15" height="14" viewBox="0 0 15 14"><path d="M0.5 5.5l3-3 2.500 1.200v1.300l1.500-.5v3.500l-1.500-.3v1.300l-2.500 1.500-3-1.500z" fill="#1a1a1a"/><path d="M1.4 5.8l1.800-1.800.8.400-1.800 1.900z" fill="#aaa"/><path d="M9 2q5 5 0 10.500" fill="none" stroke="#1818b0" stroke-width="1.500"/><path d="M7.500 1l4 .5-2 3zM7.500 13.500l4-.5-2-3z" fill="#1818b0"/></svg>
</div>
<div class="b" style="left:651px;top:64px;width:20px;height:19px">
<svg style="left:2.5px;top:2.3px" width="15" height="14" viewBox="0 0 15 14"><circle cx="5.500" cy="5.500" r="4" fill="#fff" stroke="#222" stroke-width="1.100"/><path d="M8.500 8.500l4.500 4.500" stroke="#222" stroke-width="1.800"/><path d="M10.500 2.500h3.500M12.300.800v3.400M10.500 6.500h3.500" stroke="#222" stroke-width="1"/></svg>
</div>
<div class="b" style="left:671px;top:64px;width:20px;height:19px">
<svg style="left:2.5px;top:2.3px" width="15" height="14" viewBox="0 0 15 14"><circle cx="6.500" cy="6" r="4.700" fill="#fff" stroke="#222" stroke-width="1.100"/><path d="M10 9.500l4 4" stroke="#222" stroke-width="1.800"/><path d="M2.500 5.500h6.500v3.500H2.500z" fill="none" stroke="#c01818" stroke-width="1"/></svg>
</div>
<div class="b" style="left:692px;top:64px;width:20px;height:19px">
<svg style="left:2.5px;top:2.3px" width="15" height="14" viewBox="0 0 15 14"><path d="M7.500 0l-2.300 3h1.500v3.200H3.500V4.700L.500 7l3 2.300V7.800h3.200V11H5.200l2.300 3 2.300-3H8.300V7.800h3.200v1.500l3-2.300-3-2.300v1.500H8.300V3h1.500z" fill="#c01818"/><circle cx="7.500" cy="7" r="1.600" fill="#d4d0c8" stroke="#222" stroke-width=".7"/></svg>
</div>
<div class="b" style="left:712px;top:64px;width:20px;height:19px">
<svg style="left:2.5px;top:2.3px" width="15" height="14" viewBox="0 0 15 14"><path d="M0.5 3.5l3-3 2.500 1.200v1.300l1.500-.5v3.500l-1.500-.3v1.300l-2.500 1.500-3-1.500z" fill="#1a1a1a"/><path d="M1.4 3.8l1.800-1.800.8.400-1.800 1.900z" fill="#aaa"/><path d="M8.500 5.500h4.500M11.200 3.300l2.600 2.200-2.600 2.200" fill="none" stroke="#1818b0" stroke-width="1.200"/><path d="M1 10.500h13v2.500H1z" fill="#f0e020" stroke="#555" stroke-width=".5"/><path d="M3 10.500v1.300M5 10.500v1.300M7 10.500v1.300M9 10.500v1.300M11 10.500v1.300M13 10.500v1.300" stroke="#333" stroke-width=".7"/></svg>
</div>
<div class="b" style="left:733px;top:64px;width:20px;height:19px">
<svg style="left:2.5px;top:2.3px" width="15" height="14" viewBox="0 0 15 14"><path d="M1.500 9l2-1.200 1.300 1 .7-3.300 1.500.3.600-1.300 1.400.5.300 1 1.200.5-.3 3 .8 1-1.300 3h-5.500z" fill="#fff" stroke="#222" stroke-width=".9"/><path d="M11.500 1v6M8.500 4h6" stroke="#222" stroke-width="1"/><path d="M11.500 0l-1.300 1.800h2.600zM15 4l-1.800-1.300v2.600z" fill="#222"/></svg>
</div>
<div class="b" style="left:753px;top:64px;width:20px;height:19px">
<svg style="left:2.5px;top:2.3px" width="15" height="14" viewBox="0 0 15 14"><path d="M4.500 11.500a5 5 0 1 1 6 0" fill="none" stroke="#1818b0" stroke-width="1.400"/><path d="M2.500 10l4 .2-2.800 3.300zM12.500 10l-4 .2 2.800 3.300z" fill="#1818b0"/><path d="M7.500 1v4.500" stroke="#c01818" stroke-width="1.100"/></svg>
</div>
<div class="b" style="left:780px;top:64px;width:20px;height:19px">
<svg style="left:2.5px;top:2.3px" width="15" height="14" viewBox="0 0 15 14"><circle cx="6.500" cy="6" r="4.800" fill="#fff" stroke="#222" stroke-width="1.200"/><path d="M10 9.500l4 4" stroke="#222" stroke-width="1.900"/><path d="M2.500 6h8M6.500 2v8" stroke="#c01818" stroke-width="1.100"/></svg>
</div>
<div class="b" style="left:800px;top:64px;width:20px;height:19px">
<svg style="left:2.5px;top:2.3px" width="15" height="14" viewBox="0 0 15 14"><path d="M0.5 4.5l3-3 2.500 1.200v1.300l1.500-.5v3.500l-1.500-.3v1.300l-2.500 1.500-3-1.500z" fill="#1a1a1a"/><path d="M1.4 4.8l1.800-1.800.8.400-1.800 1.900z" fill="#aaa"/><path d="M6.500 4.500h7.500v8H6.500z" fill="#fff" stroke="#222" stroke-width="1"/><path d="M6.500 4.500h7.500v1.800H6.500z" fill="#10108a"/><path d="M8 8.500h4.500M8 10.500h4.500" stroke="#222" stroke-width=".9"/></svg>
</div>
<div class="b" style="left:864px;top:64px;width:20px;height:19px">
<svg style="left:2.5px;top:2.3px" width="15" height="14" viewBox="0 0 15 14"><circle cx="9" cy="3.200" r="1.800" fill="#111"/><path d="M8 5l-3.500 2-2.500 5M7.500 5.500l3.500 2.500 1 4.500M5 8l3.500 1.500-.5 3.500M10 6.500l3.500 5.500" fill="none" stroke="#111" stroke-width="2" stroke-linecap="round"/><path d="M1.500 1v3.500" stroke="#c01818" stroke-width="1"/></svg>
</div>
<div class="b" style="left:885px;top:64px;width:20px;height:19px">
<svg style="left:2.5px;top:2.3px" width="15" height="14" viewBox="0 0 15 14"><g transform="translate(.8 .8)"><circle cx="9" cy="3.200" r="1.800" fill="#fff"/><path d="M8 5l-3.500 2-2.500 5M7.500 5.500l3.500 2.500 1 4.500M5 8l3.500 1.500-.5 3.500M10 6.500l3.500 5.500" fill="none" stroke="#fff" stroke-width="2" stroke-linecap="round"/></g><circle cx="9" cy="3.200" r="1.800" fill="#8a8782"/><path d="M8 5l-3.500 2-2.500 5M7.500 5.500l3.500 2.500 1 4.500M5 8l3.500 1.500-.5 3.500M10 6.500l3.500 5.500" fill="none" stroke="#8a8782" stroke-width="2" stroke-linecap="round"/><path d="M1.500 1v3.500M3 1v2" stroke="#8a8782" stroke-width=".8"/></svg>
</div>
<div class="b" style="left:905px;top:64px;width:20px;height:19px">
<svg style="left:2.5px;top:2.3px" width="15" height="14" viewBox="0 0 15 14"><g transform="translate(.8 .8)"><circle cx="8" cy="2.500" r="1.600" fill="#fff"/><path d="M8 4.500v4l-2.500 4.500M8 8.500l2.500 4M4.500 6.500l3.500-1 3 2" fill="none" stroke="#fff" stroke-width="1.500"/></g><circle cx="8" cy="2.500" r="1.600" fill="#8a8782"/><path d="M8 4.500v4l-2.500 4.500M8 8.500l2.500 4M4.500 6.500l3.500-1 3 2" fill="none" stroke="#8a8782" stroke-width="1.500"/></svg>
</div>
<div class="b" style="left:926px;top:64px;width:20px;height:19px">
<svg style="left:2.5px;top:2.3px" width="15" height="14" viewBox="0 0 15 14"><path d="M6.800 1.800v3M9.200 1.800v3" stroke="#fff" stroke-width="1" transform="translate(.8 .8)"/><path d="M5.500 5h5v3l-1.500 1.500v3h-2v-3L5.500 8z" fill="#fff" transform="translate(.8 .8)"/><path d="M6.500 1v3M8.500 1v3" stroke="#8a8782" stroke-width="1"/><path d="M5.500 4h4v3.500l-1 1.500v3.500h-2V9l-1-1.500z" fill="#8a8782"/></svg>
</div>
<div style="left:0;top:86.5px;width:1021px;height:1.5px;background:#8a8782"></div>
<div style="left:0;top:87px;width:1.2px;height:661px;background:#8a8782"></div>
<div id="vp" style="left:1.2px;top:87.6px;width:1018.6px;height:660.2px;background:#000;overflow:hidden">
<svg style="left:-1.2px;top:-87.6px" width="1024" height="768" viewBox="0 0 1024 768">
<defs>
<linearGradient id="rimg" x1="207" x2="814" y1="0" y2="0" gradientUnits="userSpaceOnUse">
<stop offset="0" stop-color="#666"/><stop offset="0.035" stop-color="#989898"/><stop offset="0.3" stop-color="#999"/><stop offset="0.5" stop-color="#8e8e8e"/><stop offset="0.75" stop-color="#767676"/><stop offset="0.9" stop-color="#5c5c5c"/><stop offset="0.97" stop-color="#555"/><stop offset="1" stop-color="#444"/>
</linearGradient>
<linearGradient id="cylg" x1="402" x2="619" y1="0" y2="0" gradientUnits="userSpaceOnUse">
<stop offset="0" stop-color="#4a4a4a"/><stop offset="0.12" stop-color="#686868"/><stop offset="0.5" stop-color="#6a6a6a"/><stop offset="0.8" stop-color="#5a5a5a"/><stop offset="1" stop-color="#474747"/>
</linearGradient>
<linearGradient id="domeg" x1="250" x2="772" y1="0" y2="0" gradientUnits="userSpaceOnUse">
<stop offset="0" stop-color="#383838"/><stop offset="0.5" stop-color="#414141"/><stop offset="1" stop-color="#363636"/>
</linearGradient>
</defs>
<path d="M250,394.5 L375,352.5 L405,349.4 Q510,342 616,349 L647,352.5 L737.5,377.5 L772.5,394.5 Z" fill="url(#domeg)"/>
<path d="M402.5,316.5 L405.3,349.6 Q510,341.8 616.2,349 L619,316.5 Z" fill="url(#cylg)"/>
<path d="M402.5,316.5 L425,307 Q510,298 594,306.5 L619,316.5 Q510,319.5 402.5,316.5 Z" fill="#5f5f5f"/>
<path d="M207.8,400.8 L225,395.8 Q510,387.2 796,395.8 L814,400.3 L812,426.2 L210.5,426.2 Z" fill="url(#rimg)"/>
<circle cx="510.8" cy="377.5" r="8.8" fill="#f00"/>
<path d="M510,384 L479,503 M510.3,384 L491,503 M510.8,384 V503 M511.3,384 L530.5,503 M511.6,384 L541.5,503" stroke="#f00" stroke-width="1.5" fill="none"/>
<path d="M510.7,150.5V484.5" stroke="#00e81c" stroke-width="1.6"/>
<path d="M341.8,316.3H677.8" stroke="#00e81c" stroke-width="1.6"/>
<path d="M510.8,699V708.5" stroke="#f00" stroke-width="1.5"/>
</svg>

</div>
<div style="left:0;top:747.8px;width:1021px;height:1.2px;background:#fff"></div>
<div style="left:765.5px;top:750.5px;width:57.5px;height:13px;box-shadow:inset 1px 1px 0 #8a8782,inset -1px -1px 0 #fff;font-size:9.8px;line-height:13px;padding-left:2px;white-space:nowrap">X:</div>
<div style="left:825.5px;top:750.5px;width:57.5px;height:13px;box-shadow:inset 1px 1px 0 #8a8782,inset -1px -1px 0 #fff;font-size:9.8px;line-height:13px;padding-left:2px;white-space:nowrap">Y:</div>
<div style="left:885.5px;top:750.5px;width:58.5px;height:13px;box-shadow:inset 1px 1px 0 #8a8782,inset -1px -1px 0 #fff;font-size:9.8px;line-height:13px;padding-left:2px;white-space:nowrap">Z:</div>
<div style="left:946.5px;top:750.5px;width:53px;height:13px;box-shadow:inset 1px 1px 0 #8a8782,inset -1px -1px 0 #fff;font-size:9.8px;line-height:13px;padding-left:2px;white-space:nowrap">1148x744</div>
<div style="left:1002px;top:750.5px;width:18px;height:13px;box-shadow:inset 1px 1px 0 #8a8782,inset -1px -1px 0 #fff;font-size:9.8px;line-height:13px;padding-left:2px;white-space:nowrap">cm</div>
<div style="left:831px;top:100px;width:164.5px;height:282px;background:#d4d0c8;box-shadow:inset 1px 1px 0 #d4d0c8,inset -1px -1px 0 #45433f,inset 2px 2px 0 #fff,inset -2px -2px 0 #8a8782">
<div style="left:4px;top:4px;width:156.5px;height:15.5px;background:linear-gradient(90deg,#858585,#c0c0c0)"></div>
<svg style="left:5px;top:5px" width="14" height="14" viewBox="0 0 14 14"><path d="M1 1h9l3 3v9H1z" fill="#c8c8c8" stroke="#777" stroke-width=".8"/><path d="M3 4l4-2 2 3" fill="none" stroke="#222" stroke-width="1"/><path d="M2 6l3-1 1 5-3 2z" fill="#f4ec60"/><path d="M8 11h4M10 8v3" stroke="#555" stroke-width="1"/></svg>
<div id="ptl" style="left:20.5px;top:5px;height:14px;line-height:14px;font-weight:bold;font-size:10.4px;color:#d8d5ce;white-space:nowrap">Luminaires</div>
<div class="b" style="left:145.5px;top:5.5px;width:14px;height:12.5px"></div><svg style="left:145.5px;top:5.5px" width="14" height="12.5" viewBox="0 0 14 12.5"><path d="M4 3.2l5.6 5.6M9.6 3.2l-5.600 5.600" stroke="#000" stroke-width="1.5"/></svg>
<div style="left:3.5px;top:21px;width:157px;height:54.5px;background:#fff;box-shadow:inset 1px 1px 0 #8a8782"></div>
<div style="left:4.5px;top:22px;width:155px;height:52.5px;background:#000;overflow:hidden"><svg style="left:0;top:0" width="155" height="53" viewBox="835.5 122 155 53"><defs><linearGradient id="ml" x1="0" x2="1"><stop offset="0" stop-color="#666"/><stop offset=".35" stop-color="#4e4e4e"/><stop offset="1" stop-color="#444"/></linearGradient><linearGradient id="mb" x1="0" x2="1"><stop offset="0" stop-color="#8c8c8c"/><stop offset=".5" stop-color="#7a7a7a"/><stop offset="1" stop-color="#5c5c5c"/></linearGradient></defs><path d="M913,163.500V173.800" stroke="#f00" stroke-width="1.700"/><ellipse cx="913.300" cy="165.600" rx="7" ry="2.600" fill="#c00000" stroke="#f00" stroke-width="1.400"/><path d="M882.3,146.400 L895.500,140.600 L930.600,140.600 L943.800,147.200 L937.700,157.800 L926.200,161.300 L913,163 L900.800,160.400 L887.600,156.900 Z" fill="url(#mb)"/><path d="M882.3,146.400 L895.500,140.600 L930.600,140.600 L943.800,147.200 L937.400,154 L926,157.400 L913,158.800 L900.800,156.600 L887.600,153 Z" fill="url(#ml)"/><path d="M913,121.800V157M899,142 L923.600,135.400M903,135.600 L927.500,142" stroke="#00e81c" stroke-width="1.800" fill="none"/></svg></div>
<div style="left:3.5px;top:76px;width:157px;height:202px;background:#fff;box-shadow:inset 1px 1px 0 #8a8782"></div>
<svg style="left:5px;top:77.5px" width="17" height="15" viewBox="0 0 17 15"><path d="M1.500 1.500l5.500 5M4.500 1l5 4.500" stroke="#333" stroke-width="1.100" fill="none"/><circle cx="9.500" cy="9.500" r="3.800" fill="#f8f0a0" stroke="#c8c080" stroke-width="1"/></svg>
<div style="left:23px;top:77.8px;width:136.500px;height:14px;background:#0a246a"></div>
<div id="pli" style="left:23px;top:78.3px;height:13px;line-height:13px;color:#fff;white-space:nowrap;font-size:10.67px">顶灯<span class="t" style="font-size:10px;letter-spacing:-.46px">0021</span></div>
</div>
<div id="dlg" style="left:103.5px;top:500.25px;width:757px;height:199.25px;background:#d4d0c8;box-shadow:inset 1px 1px 0 #d4d0c8,inset -1px -1px 0 #45433f,inset 2px 2px 0 #fff,inset -2px -2px 0 #8a8782">
<div style="left:3px;top:2.25px;width:751px;height:16.25px;background:linear-gradient(90deg,#0a246a 0%,#2b4a8f 35%,#6f97cf 75%,#a6caf0 100%)"></div>
<svg style="left:4px;top:3.25px" width="14.5" height="14.5" viewBox="0 0 14 14"><path d="M.5.500h9l4 4v9H.5z" fill="#d8d8d8" stroke="#666" stroke-width=".8"/><path d="M2 2l5 4" stroke="#113" stroke-width="1.300"/><path d="M2.500 6.500l4-1 1 6-5 1.500z" fill="#f6ee70"/><path d="M8 12h5M10.500 8v4" stroke="#335" stroke-width="1"/></svg>
<div id="dtl" style="left:20px;top:3.25px;height:14.5px;line-height:14.5px;color:#fff;font-weight:bold;white-space:nowrap;font-size:10.67px;letter-spacing:.65px;font-family:'Liberation Serif','Noto Sans CJK SC',serif">光照 属性 - 顶灯0021</div>
<div class="b" style="left:739px;top:4.75px;width:13px;height:11.5px"></div><svg style="left:739px;top:4.75px" width="13" height="11.5" viewBox="0 0 13 11.5"><path d="M3.500 2.800l5.400 5.400M8.900 2.800l-5.400 5.400" stroke="#000" stroke-width="1.500"/></svg>
<div class="cj" id="l1" style="left:10px;top:26.25px;">光源类型<span class="t" style="margin-left:1.5px;margin-right:-4.2668px">(<u>o</u>):</span></div>
<div class="sk" style="left:96.25px;top:25.5px;width:58.75px;height:16.25px"></div>
<div class="dd" style="left:139px;top:27.5px;width:14px;height:12.25px"></div>
<svg style="left:142px;top:31.625px" width="8" height="5" viewBox="0 0 8 5"><path d="M.8.500h6.400L4 4.200z" fill="#000"/></svg>
<div class="mo" style="left:99.75px;top:27.125px">Point</div>
<div class="sk cb" style="left:162.5px;top:27.75px;"></div>
<div class="cj gr" id="l2" style="left:178.5px;top:26.25px;">点取发光面<span class="t" style="margin-left:1.5px;margin-right:-3.2001px">(<u>k</u>)</span></div>
<div class="grp" style="left:10.5px;top:53.65px;width:324.75px;height:135.5px"></div>
<div class="cj gl" id="g1" style="left:15px;top:47.15px">光源变换</div>
<div style="left:8.5px;top:92.75px;width:330px;height:99px;background:#d4d0c8"></div>
<div class="cj" id="l3" style="left:23px;top:66.25px;">值<span class="t" style="margin-left:1.5px;margin-right:-4.2668px">(<u>V</u>):</span></div>
<div class="sk" style="left:77px;top:64.75px;width:71.5px;height:16.5px"></div>
<div class="dd" style="left:132.5px;top:66.75px;width:14px;height:12.5px"></div>
<svg style="left:135.5px;top:71px" width="8" height="5" viewBox="0 0 8 5"><path d="M.8.500h6.400L4 4.200z" fill="#000"/></svg>
<div class="mo" style="left:80.5px;top:66.5px">Absolute</div>
<div class="grp" style="left:10.5px;top:90.65px;width:184.5px;height:98.5px"></div>
<div class="cj gl" id="g2" style="left:15.5px;top:84.15px">位置</div>
<div class="grp" style="left:202.5px;top:90.65px;width:132px;height:98.5px"></div>
<div class="cj gl" id="g3" style="left:208.25px;top:84.15px">旋转<span class="t" style="margin-left:1.5px;margin-right:-3.2001px">(<u>R</u>)</span></div>
<div class="sk cb" style="left:23px;top:102.75px;"></div>
<div class="cj" id="l4" style="left:39.5px;top:102px;">点取<span class="t" style="margin-left:1.5px;margin-right:-3.2001px">(<u>P</u>)</span></div>
<div class="sk cb" style="left:23px;top:118.5px;background:#d4d0c8;"></div>
<div class="cj gr" id="l5" style="left:38.5px;top:117.75px;">捕捉最近顶点<span class="t" style="margin-left:1.5px;margin-right:-3.2001px">(<u>t</u>)</span></div>
<div class="mo" style="left:49.5px;top:134.75px;">x:</div>
<div class="sk" style="left:77px;top:134.25px;width:51.5px;height:14.25px"></div>
<div class="nu" style="left:79.5px;top:134.875px">191<i>.</i>572</div>
<div class="mo" style="left:49.5px;top:152.55px;">y:</div>
<div class="sk" style="left:77px;top:152.25px;width:51.5px;height:13.5px"></div>
<div class="nu" style="left:79.5px;top:152.5px"><i>-</i>332<i>.</i>116</div>
<div class="mo" style="left:49.5px;top:169.25px;">z:</div>
<div class="sk" style="left:77px;top:168.5px;width:51.5px;height:14.25px"></div>
<div class="nu" style="left:79.5px;top:169.125px">221<i>.</i>875</div>
<div class="mo" style="left:216px;top:103.75px;">x:</div>
<div class="sk" style="left:249.5px;top:102.25px;width:52px;height:14.5px"></div>
<div class="mo" style="left:216px;top:122px;">y:</div>
<div class="sk" style="left:249.5px;top:120.25px;width:52px;height:14.5px"></div>
<div class="mo" style="left:216px;top:138.75px;">z:</div>
<div class="sk" style="left:249.5px;top:137.75px;width:52px;height:14.5px"></div>
<div class="grp" style="left:349.5px;top:33px;width:175.5px;height:130.5px"></div>
<div class="cj gl" id="g4" style="left:354.5px;top:26.5px">灯光颜色规格<span class="t" style="margin-left:1.5px;margin-right:-3.2001px">(<u>C</u>)</span></div>
<div class="sk" style="left:362px;top:48.75px;width:109.5px;height:16px"></div>
<div class="dd" style="left:455.5px;top:50.75px;width:14px;height:12px"></div>
<svg style="left:458.5px;top:54.75px" width="8" height="5" viewBox="0 0 8 5"><path d="M.8.500h6.400L4 4.200z" fill="#000"/></svg>
<div class="cj" style="left:365.5px;top:51.25px">卤素灯</div>
<div class="cj" id="l6" style="left:361px;top:84.75px;">颜色过滤器<span class="t" style="margin-left:1.5px;margin-right:-3.2001px">(<u>l</u>)</span></div>
<div class="sk" style="left:356px;top:103.5px;width:40px;height:16.25px"></div>
<div class="dd" style="left:380px;top:105.5px;width:14px;height:12.25px"></div>
<svg style="left:383px;top:109.625px" width="8" height="5" viewBox="0 0 8 5"><path d="M.8.500h6.400L4 4.200z" fill="#000"/></svg>
<div class="mo" style="left:359.5px;top:105.125px">HSV</div>
<div style="left:356px;top:122.75px;width:41.5px;height:35px;background:#fff;border:1px solid #222"></div>
<div style="left:402px;top:104.25px;font-weight:bold;font-size:11.5px;line-height:13px;height:13px">H</div>
<div class="sk" style="left:416.5px;top:102.25px;width:23.75px;height:15.5px;overflow:hidden"><div class="nu" style="left:2.2px;top:1.25px;font-size:10.4px;letter-spacing:-.15px">0<i>.</i>00</div></div>
<div style="left:402px;top:123.75px;font-weight:bold;font-size:11.5px;line-height:13px;height:13px">S</div>
<div class="sk" style="left:416.5px;top:121.75px;width:23.75px;height:16px;overflow:hidden"><div class="nu" style="left:2.2px;top:1.5px;font-size:10.4px;letter-spacing:-.15px">0<i>.</i>00</div></div>
<div style="left:402px;top:144.25px;font-weight:bold;font-size:11.5px;line-height:13px;height:13px">V</div>
<div class="sk" style="left:416.5px;top:140.75px;width:23.75px;height:17.75px;overflow:hidden"><div class="nu" style="left:2.2px;top:2.375px;font-size:10.4px;letter-spacing:-.15px">1<i>.</i>00</div></div>
<div class="sk" style="left:446px;top:99.75px;width:78px;height:62.5px;background:#d4d0c8"></div>
<div style="left:447.8px;top:101.05px;width:74.2px;height:18.700px;background:linear-gradient(90deg,#f00 0%,#ff0 17%,#0f0 33%,#0ff 50%,#00f 67%,#f0f 83%,#f00 100%)"></div>
<div style="left:447.8px;top:121.05px;width:74.2px;height:18.200px;background:linear-gradient(90deg,#fff,#f00)"></div>
<div style="left:447.8px;top:141.05px;width:74.2px;height:19.200px;background:linear-gradient(90deg,#000,#fff)"></div>
<div style="left:447.8px;top:110.75px;width:5px;height:9px;background:#d4d0c8;box-shadow:inset 1px 1px 0 #fff,inset -1px -1px 0 #8a8782"></div>
<div style="left:447.8px;top:130.25px;width:5px;height:9px;background:#d4d0c8;box-shadow:inset 1px 1px 0 #fff,inset -1px -1px 0 #8a8782"></div>
<div style="left:517px;top:151.75px;width:5px;height:9px;background:#d4d0c8;box-shadow:inset 1px 1px 0 #fff,inset -1px -1px 0 #8a8782"></div>
<div class="grp" style="left:535.25px;top:33px;width:205px;height:130.5px"></div>
<div class="cj gl" id="g5" style="left:540px;top:26.5px">亮度</div>
<div class="cj" id="l7" style="left:542px;top:50.25px;">光度<span class="t" style="margin-left:1.5px;margin-right:-4.2668px">(<u>u</u>):</span></div>
<div class="sk" style="left:608.5px;top:48.75px;width:128px;height:16px"></div>
<div class="dd" style="left:720.5px;top:50.75px;width:14px;height:12px"></div>
<svg style="left:723.5px;top:54.75px" width="8" height="5" viewBox="0 0 8 5"><path d="M.8.500h6.400L4 4.200z" fill="#000"/></svg>
<div class="mo" style="left:612px;top:50.25px">Luminous Intensity</div>
<div class="sk" style="left:608.5px;top:67.75px;width:52.5px;height:15px"></div>
<div class="nu" style="left:611px;top:68.75px">3000</div>
<div style="left:632.3px;top:70.25px;width:1px;height:10px;background:#000"></div>
<div class="mo" style="left:681.5px;top:69px;">cd</div>
<div class="cj" id="l8" style="left:542px;top:92.75px;">光分布<span class="t" style="margin-left:1.5px;margin-right:-4.2668px">(<u>b</u>):</span></div>
<div class="sk" style="left:608.5px;top:91.75px;width:99px;height:15.5px"></div>
<div class="dd" style="left:691.5px;top:93.75px;width:14px;height:11.5px"></div>
<svg style="left:694.5px;top:97.5px" width="8" height="5" viewBox="0 0 8 5"><path d="M.8.500h6.400L4 4.200z" fill="#000"/></svg>
<div class="cj" style="left:612px;top:94px">点射</div>
<div class="cj" id="l9" style="left:541.5px;top:115.25px;">光束角度<span class="t" style="margin-left:1.5px;margin-right:-4.2668px">(<u>m</u>):</span></div>
<div class="sk" style="left:609px;top:113.5px;width:30px;height:13.75px"></div>
<div class="nu" style="left:611.5px;top:113.875px">30<i>.</i>0</div>
<div class="cj" id="l10" style="left:541.5px;top:137px;">光域角度</div>
<div class="sk" style="left:609px;top:137.25px;width:30px;height:13.75px"></div>
<div class="nu" style="left:611.5px;top:137.625px">90<i>.</i>0</div>
<div style="left:647px;top:118.55px;width:88px;height:2.5px;background:#8a8782;box-shadow:0 1px 0 #fff,inset 0 1px 0 #55524e"></div>
<svg style="left:659.8px;top:113.75px" width="7" height="14" viewBox="0 0 7 14"><path d="M.5.500h5v9L3 13.200.5 9.500z" fill="#d4d0c8" stroke="#6a6863" stroke-width=".9"/><path d="M1.200 9V1.200h3.600" stroke="#fff" stroke-width="1" fill="none"/></svg>
<div style="left:647px;top:142.3px;width:88px;height:2.5px;background:#8a8782;box-shadow:0 1px 0 #fff,inset 0 1px 0 #55524e"></div>
<svg style="left:688px;top:137.5px" width="7" height="14" viewBox="0 0 7 14"><path d="M.5.500h5v9L3 13.200.5 9.500z" fill="#d4d0c8" stroke="#6a6863" stroke-width=".9"/><path d="M1.200 9V1.200h3.600" stroke="#fff" stroke-width="1" fill="none"/></svg>
<div class="sk cb" style="left:362px;top:174.75px;"></div>
<svg style="left:362px;top:174.75px" width="11" height="11" viewBox="0 0 11 11"><path d="M2.500 5l2 2.300 4-4.300" stroke="#000" stroke-width="1.700" fill="none"/></svg>
<div class="cj" id="l11" style="left:377.5px;top:173.75px;">预览<span class="t" style="margin-left:1.5px;margin-right:-3.2001px">(<u>e</u>)</span></div>
<div style="left:454.5px;top:170.5px;width:67px;height:18.75px;background:#000"></div>
<div class="pb" style="left:455.5px;top:171.5px;width:65px;height:16.75px"></div>
<div class="cj" id="b1" style="left:454.5px;top:173.375px;width:67px;text-align:center">确定</div>
<div class="pb" style="left:528.5px;top:170.5px;width:66.75px;height:18.75px"></div>
<div class="cj" id="b2" style="left:528.5px;top:173.375px;width:66.75px;text-align:center">取消</div>
<div class="pb" style="left:601.25px;top:170.5px;width:66.5px;height:18.75px"></div>
<div class="cj" id="b3" style="left:601.25px;top:173.375px;width:66.5px;text-align:center">应用<span class="t" style="margin-left:1.5px;margin-right:-3.2001px">(<u>A</u>)</span></div>
<div class="pb" style="left:675px;top:170.5px;width:66px;height:18.75px"></div>
<div class="cj" id="b4" style="left:675px;top:173.375px;width:66px;text-align:center">帮助<span class="t" style="margin-left:1.5px;margin-right:-3.2001px">(<u>H</u>)</span></div>
</div>
</div></body></html>
